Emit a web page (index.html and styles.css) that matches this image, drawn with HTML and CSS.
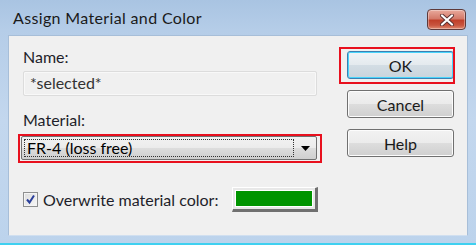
FILE: index.html
```html
<!DOCTYPE html>
<html>
<head>
<meta charset="utf-8">
<link rel="stylesheet" href="styles.css">
</head>
<body>
<div class="window">
  <div class="titlebar">
    <span class="title">Assign Material and Color</span>
    <button class="close" aria-label="Close">
      <svg width="16" height="12" viewBox="0 0 16 12"><path d="M3 1.5 L13 10.5 M13 1.5 L3 10.5" stroke="#5a3030" stroke-width="4" stroke-linecap="round"/><path d="M3 1.5 L13 10.5 M13 1.5 L3 10.5" stroke="#ffffff" stroke-width="2.2" stroke-linecap="round"/></svg>
    </button>
  </div>
  <div class="client">
    <div class="form">
      <label class="label">Name:</label>
      <div class="textbox">*selected*</div>
      <label class="label material-label">Material:</label>
      <div class="combo-wrap">
        <div class="combo">
          <div class="combo-text"><span class="focus">FR-4 (loss free)</span></div>
          <div class="combo-arrow"><svg width="9" height="5" viewBox="0 0 9 5"><path d="M0 0 H9 L4.5 5 Z" fill="#000"/></svg></div>
        </div>
        <div class="mark mark-combo"></div>
      </div>
      <div class="overwrite">
        <span class="check"><svg width="11" height="11" viewBox="0 0 11 11"><path d="M2 5.5 L4.5 8.5 L9 1.5" stroke="#2a3f9a" stroke-width="2" fill="none"/></svg></span>
        <span class="check-label">Overwrite material color:</span>
        <span class="swatch"><span class="swatch-fill"></span></span>
      </div>
    </div>
    <div class="buttons">
      <div class="btn-wrap">
        <button class="btn default">OK</button>
        <div class="mark mark-ok"></div>
      </div>
      <button class="btn">Cancel</button>
      <button class="btn">Help</button>
    </div>
  </div>
  <div class="bottom-line"></div>
</div>
</body>
</html>
```

FILE: styles.css
```css
* { box-sizing: border-box; }
html, body { margin: 0; padding: 0; }
body {
  width: 476px;
  height: 245px;
  overflow: hidden;
  font-family: "Lato", "Open Sans", sans-serif;
  color: #1e1e2a;
}
.window {
  width: 476px;
  height: 245px;
  background: linear-gradient(to bottom, #a9c4e2 0px, #b5cde8 30px, #c3d7ee 120px, #bcd3ec 245px);
  display: flex;
  flex-direction: column;
  position: relative;
}
.titlebar {
  height: 35px;
  display: flex;
  align-items: flex-start;
  justify-content: space-between;
  padding: 0 10px 0 13px;
}
.title {
  font-size: 16px;
  letter-spacing: 0.35px;
  margin-top: 8px;
  color: #1a1a1a;
}
.close {
  margin-top: 9px;
  width: 39px;
  height: 21px;
  border: 1px solid #5e3a3a;
  border-radius: 4px;
  background: linear-gradient(to bottom, #e9a99c 0%, #d47a6a 45%, #c0402a 55%, #c8553f 80%, #e08a70 100%);
  box-shadow: inset 0 0 0 1px rgba(255,255,255,0.35);
  display: flex;
  align-items: center;
  justify-content: center;
  padding: 0;
}
.client {
  margin: 0 8px;
  height: 201px;
  background: #f0f0f0;
  border: 1px solid #a7bed8;
  border-bottom-color: #d0dff0;
  display: flex;
  padding: 11px 0 0 14px;
  font-size: 16px;
}
.form {
  width: 300px;
  display: flex;
  flex-direction: column;
}
.label {
  line-height: 20px;
  height: 21px;
}
.textbox {
  margin-top: 3px;
  width: 294px;
  height: 25px;
  border: 1px solid #dcdcdc;
  border-radius: 2px;
  background: #f0f0f0;
  box-shadow: inset 0 0 0 1px #f8f8f8;
  padding-left: 6px;
  line-height: 22px;
  color: #333;
}
.material-label { margin-top: 14px; }
.combo-wrap {
  position: relative;
  margin-top: 5px;
  margin-left: -2px;
  width: 296px;
}
.combo {
  height: 24px;
  border: 1px solid #707070;
  border-radius: 2px;
  background: linear-gradient(to bottom, #f2f2f2 0%, #ebebeb 50%, #dddddd 51%, #cfcfcf 100%);
  display: flex;
}
.combo-text {
  flex: 1;
  padding: 2px 1px 2px 2px;
}
.focus {
  display: block;
  height: 18px;
  border: 1px dotted #333;
  line-height: 15px;
  padding-left: 2px;
  color: #000;
  width: 270px;
}
.combo-arrow {
  width: 24px;
  display: flex;
  align-items: center;
  justify-content: center;
}
.mark {
  position: absolute;
  border: 2px solid #e8101e;
  pointer-events: none;
}
.mark-combo { left: -3px; top: -2px; right: -5px; bottom: -3px; }
.overwrite {
  margin-top: 26px;
  display: flex;
  align-items: center;
  height: 26px;
}
.check {
  width: 15px;
  height: 15px;
  border: 1px solid #8e8f8f;
  background: linear-gradient(135deg, #dcdcdc, #f7f7f7);
  display: flex;
  align-items: center;
  justify-content: center;
  box-shadow: inset 0 0 0 1px #f4f4f4;
}
.check-label { margin-left: 5px; width: 189px; }
.swatch {
  width: 86px;
  height: 25px;
  border-top: 1px solid #ffffff;
  border-left: 1px solid #ffffff;
  border-right: 3px solid #707070;
  border-bottom: 3px solid #707070;
  background: #e8e8e8;
  padding: 2px;
  display: flex;
}
.swatch-fill { flex: 1; background: #009400; border: 1px solid #ffffff; }
.buttons {
  margin-left: 24px;
  display: flex;
  flex-direction: column;
  gap: 11px;
  padding-top: 4px;
}
.btn-wrap { position: relative; height: 28px; }
.mark-ok { left: -8px; top: -4px; right: -1px; bottom: -5px; }
.btn {
  display: block;
  width: 107px;
  height: 28px;
  margin: 0;
  border: 1px solid #707070;
  border-radius: 3px;
  background: linear-gradient(to bottom, #f2f2f2 0%, #ebebeb 50%, #dddddd 51%, #cfcfcf 100%);
  box-shadow: inset 0 0 0 1px #fcfcfc;
  font-family: inherit;
  font-size: 16px;
  color: #1a1a1a;
  padding: 0;
}
.btn.default {
  border-color: #3c7fb1;
  box-shadow: inset 0 0 0 1px #48d4fb;
  background: linear-gradient(to bottom, #f0f4f7 0%, #e4eaee 50%, #d3dde4 51%, #c9d4dc 100%);
}
.bottom-line {
  position: absolute;
  left: 0; right: 0; bottom: 0;
  height: 2px;
  background: #3fd0f0;
}
```
